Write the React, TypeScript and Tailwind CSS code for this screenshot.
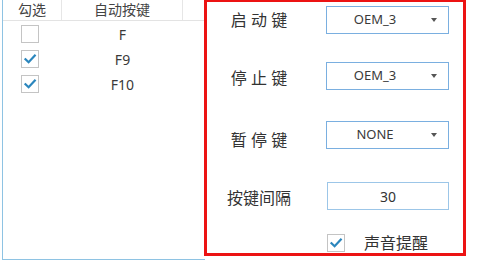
import React from "react";

const font = { fontFamily: '"Noto Sans", "Noto Sans CJK SC", sans-serif' };

function Check({ checked }: { checked: boolean }) {
  return (
    <div className="w-[18px] h-[18px] border border-[#c4c4c4] bg-white flex items-center justify-center">
      {checked && (
        <svg width="14" height="14" viewBox="0 0 14 14">
          <path d="M2.5 7.2 L5.6 10.2 L11.8 3.6" fill="none" stroke="#2b86bd" strokeWidth="2.2" strokeLinecap="square" />
        </svg>
      )}
    </div>
  );
}

function Combo({ value }: { value: string }) {
  return (
    <div className="w-[123px] h-[28px] border border-[#7aafe0] bg-white flex items-center">
      <div className="flex-1 text-center text-[13px] text-[#3a3a3a] pr-[8px]">{value}</div>
      <svg width="6" height="4" viewBox="0 0 6 4" className="mr-[11px]">
        <path d="M0 0 L6 0 L3 4 Z" fill="#555" />
      </svg>
    </div>
  );
}

export default function App() {
  const rows = [
    { k: "F", c: false },
    { k: "F9", c: true },
    { k: "F10", c: true },
  ];
  return (
    <div className="w-[477px] h-[265px] bg-white overflow-hidden flex items-start" style={font}>
      <div className="ml-[2px] w-[203px] h-[260px] border-l border-b border-[#8ec3e3] flex flex-col">
        <div className="h-[21px] flex border-b border-[#e3e3e3] text-[14px] text-[#444] leading-[20px]">
          <div className="w-[59px] text-center border-r border-[#e6e6e6]">勾选</div>
          <div className="w-[121px] text-center border-r border-[#e6e6e6]">自动按键</div>
          <div className="flex-1" />
        </div>
        {rows.map((r) => (
          <div key={r.k} className="h-[25px] flex items-center text-[14px] text-[#3a3a3a]">
            <div className="w-[59px] pl-[18px] flex items-center pt-[1px]">
              <Check checked={r.c} />
            </div>
            <div className="w-[121px] text-center pt-[1px]">{r.k}</div>
          </div>
        ))}
      </div>
      <div className="-ml-[1px] -mt-[1px] w-[262px] h-[257px] border-[3px] border-[#ec1313] flex flex-col text-[16px] text-[#333]">
        <div className="flex items-start mt-[4px]">
          <div className="w-[104px] text-center leading-[22px] mt-[3px]">启 动 键</div>
          <div className="ml-[15px]"><Combo value="OEM_3" /></div>
        </div>
        <div className="flex items-start mt-[28px]">
          <div className="w-[104px] text-center leading-[22px] mt-[5px]">停 止 键</div>
          <div className="ml-[15px]"><Combo value="OEM_3" /></div>
        </div>
        <div className="flex items-start mt-[31px]">
          <div className="w-[104px] text-center leading-[22px] mt-[8px]">暂 停 键</div>
          <div className="ml-[15px]"><Combo value="NONE" /></div>
        </div>
        <div className="flex items-start mt-[31px]">
          <div className="w-[104px] text-center leading-[22px] mt-[5px]">按键间隔</div>
          <div className="ml-[16px] w-[122px] h-[28px] border border-[#9cc6e8] bg-white flex items-center justify-center text-[14px] text-[#333]">30</div>
        </div>
        <div className="flex items-center mt-[22px] ml-[120px]">
          <Check checked={true} />
          <div className="ml-[19px] leading-[22px]">声音提醒</div>
        </div>
      </div>
    </div>
  );
}
